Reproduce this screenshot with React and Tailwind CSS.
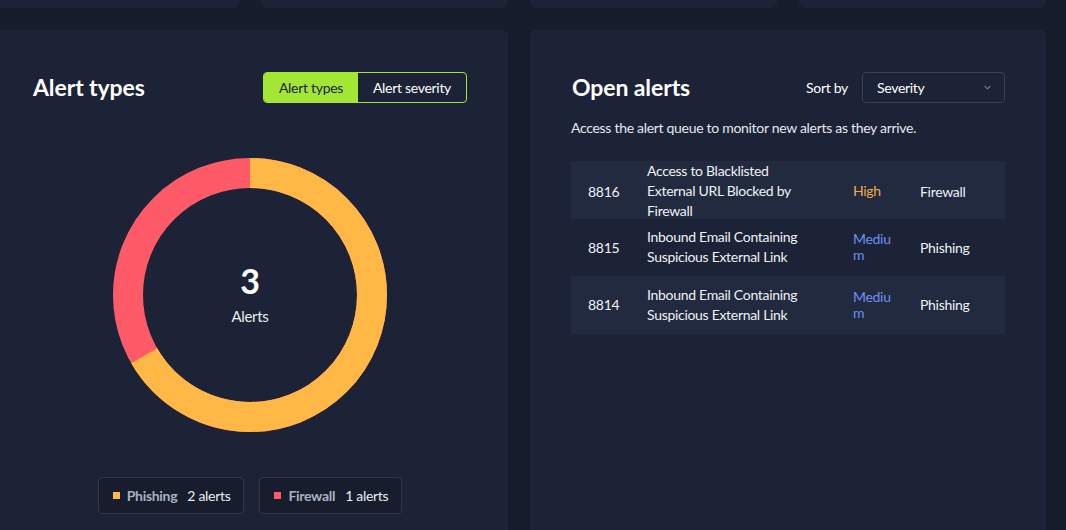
const rows = [
  { id: "8816", title: "Access to Blacklisted External URL Blocked by Firewall", severity: "High", type: "Firewall", shade: true },
  { id: "8815", title: "Inbound Email Containing Suspicious External Link", severity: "Medium", type: "Phishing", shade: false },
  { id: "8814", title: "Inbound Email Containing Suspicious External Link", severity: "Medium", type: "Phishing", shade: true },
];

const severityColor = {
  High: "text-[#f2aa46]",
  Medium: "text-[#6f8ff7]",
};

function Donut() {
  const r = 122;
  const c = 2 * Math.PI * r;
  const orange = (2 / 3) * c;
  return (
    <div className="relative h-[274px] w-[274px]">
      <svg width="274" height="274" viewBox="0 0 274 274" className="-rotate-90">
        <circle cx="137" cy="137" r={r} fill="none" stroke="#ff5a68" strokeWidth="30" />
        <circle
          cx="137"
          cy="137"
          r={r}
          fill="none"
          stroke="#ffb845"
          strokeWidth="30"
          strokeDasharray={`${orange} ${c}`}
        />
      </svg>
      <div className="absolute inset-0 flex flex-col items-center justify-center">
        <span className="text-[34px] font-bold leading-none text-white">3</span>
        <span className="mt-[8px] text-[15px] leading-5 text-[#e9edf4]">Alerts</span>
      </div>
    </div>
  );
}

function LegendChip({ color, label, count }) {
  return (
    <div className="flex h-[37px] items-center gap-[7px] rounded-[4px] border border-[#2f3748] bg-[#171d2c] pl-[14px] pr-[13px]">
      <span className={`h-[7px] w-[7px] ${color}`} />
      <span className="font-bold text-[#a9b1c2]">{label}</span>
      <span className="ml-[3px] text-[#e9edf4]">{count}</span>
    </div>
  );
}

function AlertTypes() {
  return (
    <section className="flex h-[520px] flex-col rounded-md bg-[#1c2336] px-[41px] pt-[42px]">
      <div className="flex items-center justify-between">
        <h2 className="text-[23px] font-bold leading-[31px] tracking-[-0.1px] text-white">Alert types</h2>
        <div className="flex h-[31px] overflow-hidden rounded-[4px] border border-[#a3e635]">
          <button className="w-[94px] bg-[#a3e635] text-[#1c2336]">Alert types</button>
          <button className="w-[108px] text-white">Alert severity</button>
        </div>
      </div>
      <div className="mt-[55px] flex justify-center">
        <Donut />
      </div>
      <div className="mt-[45px] flex justify-center gap-[15px]">
        <LegendChip color="bg-[#ffb845]" label="Phishing" count="2 alerts" />
        <LegendChip color="bg-[#ff5a68]" label="Firewall" count="1 alerts" />
      </div>
    </section>
  );
}

function OpenAlerts() {
  return (
    <section className="flex h-[520px] flex-col rounded-md bg-[#1c2336] px-[41px] pt-[42px]">
      <div className="flex items-center justify-between">
        <h2 className="ml-px text-[23px] font-bold leading-[31px] tracking-[-0.1px] text-white">Open alerts</h2>
        <div className="flex items-center gap-[14px]">
          <span className="text-white">Sort by</span>
          <div className="flex h-[31px] w-[143px] items-center justify-between rounded-[4px] border border-[#394155] pl-[14px] pr-[12px]">
            <span className="text-white">Severity</span>
            <svg width="9" height="9" viewBox="0 0 10 10" fill="none" stroke="#7d8598" strokeWidth="1.2">
              <path d="M2 3.5 L5 6.5 L8 3.5" />
            </svg>
          </div>
        </div>
      </div>
      <p className="mt-[14px] text-[#e4e8f0]">Access the alert queue to monitor new alerts as they arrive.</p>
      <div className="mt-[23px] flex flex-col">
        {rows.map((row) => (
          <div
            key={row.id}
            className={`grid h-[57.5px] grid-cols-[60px_207px_67px_1fr] items-center text-[#eef1f6] ${
              row.shade ? "bg-[#222a3f]" : ""
            }`}
          >
            <span className="pl-[17px]">{row.id}</span>
            <span className="pl-4 pr-[26px] leading-5">{row.title}</span>
            <span className={`break-all pl-[15px] pr-[11px] leading-4 ${severityColor[row.severity]}`}>{row.severity}</span>
            <span className="pl-[15px]">{row.type}</span>
          </div>
        ))}
      </div>
    </section>
  );
}

export default function App() {
  return (
    <div
      className="h-[530px] w-[1066px] overflow-hidden bg-[#161c2b] text-[14px] tracking-[-0.3px]"
      style={{ fontFamily: '"Lato", "Noto Sans", sans-serif' }}
    >
      <div className="-ml-2 -mt-[72px] flex w-[1054px] flex-col gap-[22px]">
        <div className="grid grid-cols-4 gap-[22px]">
          <div className="h-20 rounded-md bg-[#1c2336]" />
          <div className="h-20 rounded-md bg-[#1c2336]" />
          <div className="h-20 rounded-md bg-[#1c2336]" />
          <div className="h-20 rounded-md bg-[#1c2336]" />
        </div>
        <div className="grid grid-cols-2 gap-[22px]">
          <AlertTypes />
          <OpenAlerts />
        </div>
      </div>
    </div>
  );
}
